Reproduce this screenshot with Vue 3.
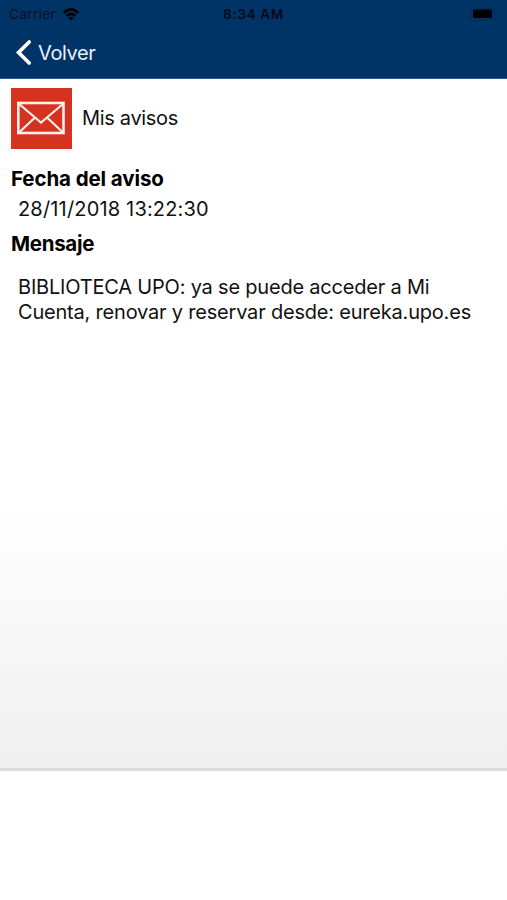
<script setup>
const title = 'Mis avisos'
const fields = {
  date: '28/11/2018 13:22:30',
  message: ['BIBLIOTECA UPO: ya se puede acceder a Mi', 'Cuenta, renovar y reservar desde: eureka.upo.es'],
}
</script>

<template>
  <div class="screen">
    <header class="top">
      <div class="status">
        <div class="carrier">
          <span class="carrier-name">Carrier</span>
          <svg class="wifi" width="18" height="14" viewBox="0 0 18 14">
            <path d="M0.8 4.7Q9 -2.9 17.2 4.7L15.3 6.7Q9 0.9 2.7 6.7Z" />
            <path d="M3.6 7.9Q9 3.3 14.4 7.9L12.5 9.8Q9 6.7 5.5 9.8Z" />
            <path d="M6.4 10.9Q9 8.8 11.6 10.9L9 13.7Z" />
          </svg>
        </div>
        <span class="time">8:34 AM</span>
        <svg class="battery" width="29" height="14" viewBox="0 0 29 14">
          <rect x="1.5" y="1" width="24" height="12" rx="3" fill="none" stroke="#002c5b" />
          <rect x="4" y="2.5" width="19" height="8.5" rx="1.2" />
          <path d="M27 5Q29 7 27 9Z" fill="#002a58" />
        </svg>
      </div>
      <div class="nav">
        <svg class="chevron" width="18" height="28" viewBox="0 0 18 28">
          <path d="M15.2 3L4.6 13.5L15.2 24" fill="none" stroke="#fff" stroke-width="3.7" stroke-linecap="round" />
        </svg>
        <span class="back">Volver</span>
      </div>
    </header>
    <main class="content">
      <div class="heading">
        <svg class="mail" width="61" height="61" viewBox="0 0 61 61">
          <rect width="61" height="61" fill="#d43320" />
          <g fill="none" stroke="#fdeeeb" stroke-width="2.6">
            <rect x="7.3" y="15" width="45.2" height="30" />
            <path d="M7.5 15.5L24 29.5L30 34.5L36 29.5L52.5 15.5M7.5 45L24 29.5M52.5 45L36 29.5" stroke-width="2.2" />
          </g>
        </svg>
        <span class="title">{{ title }}</span>
      </div>
      <h2 class="label date-label">Fecha del aviso</h2>
      <p class="date">{{ fields.date }}</p>
      <h2 class="label message-label">Mensaje</h2>
      <p class="message"><span v-for="(line, i) in fields.message" :key="i">{{ line }}</span></p>
    </main>
    <footer class="bottom"></footer>
  </div>
</template>

<style>
body { margin: 0; background: #fff; }
</style>

<style scoped>
.screen {
  width: 507px;
  height: 900px;
  display: flex;
  flex-direction: column;
  overflow: hidden;
  font-family: Inter, "Liberation Sans", sans-serif;
  font-size: 20px;
  color: #111;
  white-space: nowrap;
}
.top {
  box-sizing: border-box;
  height: 79px;
  background: #003366;
  border-bottom: 1px solid #31598a;
}
.status {
  box-sizing: border-box;
  height: 27px;
  padding: 0 9px;
  display: grid;
  grid-template-columns: 1fr auto 1fr;
  align-items: center;
  color: #000a18;
  font-size: 13.5px;
}
.carrier { display: flex; align-items: center; gap: 6px; }
.carrier-name { color: #001126; letter-spacing: 0.4px; }
.time { font-size: 13.5px; font-weight: 600; letter-spacing: 0.65px; }
.battery { justify-self: end; }
.nav {
  height: 51px;
  padding-left: 14px;
  display: flex;
  align-items: center;
  gap: 6px;
  color: #e8f1fb;
}
.back { letter-spacing: -0.4px; }
.content {
  box-sizing: border-box;
  height: 692px;
  padding: 9px 11px 0;
  background: linear-gradient(#fff 0, #fff 420px, #efefef 689px);
  border-bottom: 3px solid #dcdcdc;
}
.heading { display: flex; align-items: center; gap: 10px; height: 61px; }
.title { padding-bottom: 2px; letter-spacing: -0.32px; }
.label { margin: 0; font-size: 20.5px; line-height: 26px; font-weight: 700; letter-spacing: -0.1px; color: #000; }
.date-label { margin-top: 17px; }
.date { margin: 4px 0 0 7px; line-height: 26px; letter-spacing: 0.17px; }
.message-label { margin-top: 9px; letter-spacing: -0.3px; }
.message { margin: 18px 0 0 7px; line-height: 25px; letter-spacing: -0.2px; }
.message span { display: block; }
</style>
